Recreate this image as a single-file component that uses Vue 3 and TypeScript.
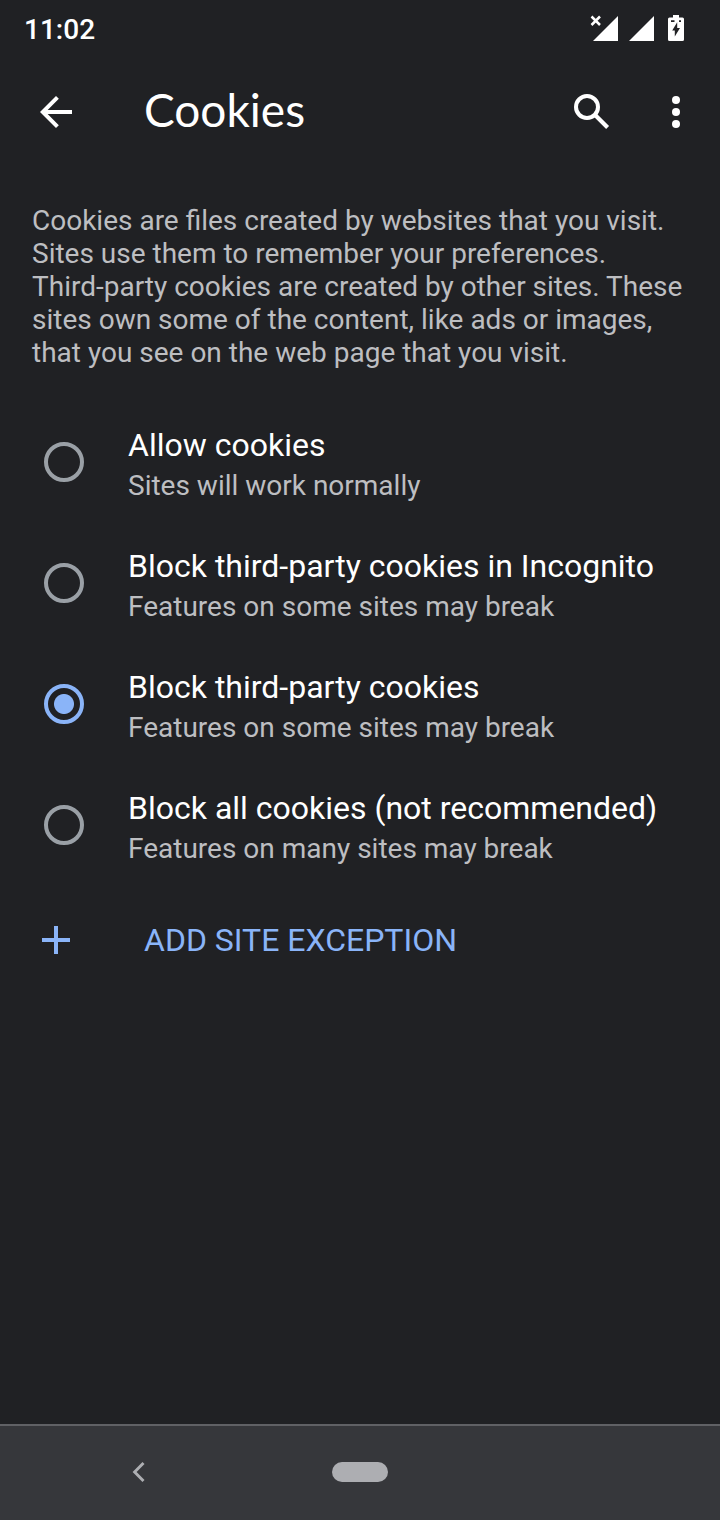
<script setup lang="ts">
import { ref } from 'vue'

interface CookieOption {
  id: string
  title: string
  detail: string
}

const options: CookieOption[] = [
  { id: 'allow', title: 'Allow cookies', detail: 'Sites will work normally' },
  { id: 'incognito', title: 'Block third-party cookies in Incognito', detail: 'Features on some sites may break' },
  { id: 'third-party', title: 'Block third-party cookies', detail: 'Features on some sites may break' },
  { id: 'all', title: 'Block all cookies (not recommended)', detail: 'Features on many sites may break' },
]

const selected = ref('third-party')
</script>

<template>
  <div class="screen">
    <div class="status">
      <span class="clock">11:02</span>
      <div class="indicators">
        <svg class="signal-off" width="28" height="28" viewBox="0 0 28 28" aria-hidden="true">
          <path d="M28 2V27H3Z" fill="#fff" />
          <path d="M1.500 2.500L10 11M10 2.500L1.500 11" stroke="#fff" stroke-width="2.500" />
        </svg>
        <svg class="signal" width="26" height="28" viewBox="0 0 26 28" aria-hidden="true">
          <path d="M26 2V27H1Z" fill="#fff" />
        </svg>
        <svg width="16" height="28" viewBox="0 0 16 28" aria-hidden="true">
          <path d="M5 1H11V3.500H14.500Q16 3.500 16 5V25.500Q16 27 14.500 27H1.500Q0 27 0 25.500V5Q0 3.500 1.500 3.500H5Z" fill="#fff" />
          <path d="M3 6.200H6.500V8H3ZM11 6.200H13V8H11ZM9.200 8.200V14H12L6.800 22.500V16.500H4.200Z" fill="#202124" />
        </svg>
      </div>
    </div>

    <header class="toolbar">
      <button class="icon-button" type="button" aria-label="Back">
        <svg width="48" height="48" viewBox="0 0 24 24" aria-hidden="true">
          <path d="M20 11H7.830l5.590-5.590L12 4l-8 8 8 8 1.410-1.410L7.830 13H20v-2z" fill="#fff" />
        </svg>
      </button>
      <h1>Cookies</h1>
      <button class="icon-button search" type="button" aria-label="Search">
        <svg width="48" height="48" viewBox="0 0 24 24" aria-hidden="true">
          <circle cx="9.500" cy="9.500" r="5.500" fill="none" stroke="#fff" stroke-width="2" />
          <path d="M13.300 13.300L19.800 19.800" stroke="#fff" stroke-width="2.100" />
        </svg>
      </button>
      <button class="icon-button" type="button" aria-label="More options">
        <svg width="48" height="48" viewBox="0 0 24 24" aria-hidden="true">
          <g fill="#fff">
            <circle cx="12" cy="6" r="2" />
            <circle cx="12" cy="12" r="2" />
            <circle cx="12" cy="18" r="2" />
          </g>
        </svg>
      </button>
    </header>

    <main>
      <p class="intro">
        Cookies are files created by websites that you visit. Sites use them to remember your preferences.
        Third-&#8288;party cookies are created by other sites. These sites own some of the content, like ads
        or images, that you see on the web page that you visit.
      </p>

      <div role="radiogroup" aria-label="Cookies">
        <label v-for="option in options" :key="option.id" class="option" :for="option.id">
          <input :id="option.id" v-model="selected" type="radio" name="cookies" :value="option.id" />
          <span class="text">
            <span class="title">{{ option.title }}</span>
            <span class="detail">{{ option.detail }}</span>
          </span>
        </label>
      </div>

      <button class="add" type="button">
        <svg width="48" height="48" viewBox="0 0 24 24" aria-hidden="true">
          <path d="M19 13h-6v6h-2v-6H5v-2h6V5h2v6h6v2z" fill="#8ab4f8" />
        </svg>
        <span>ADD SITE EXCEPTION</span>
      </button>
    </main>

    <nav class="navbar" aria-label="System navigation">
      <button class="nav-back" type="button" aria-label="System back">
        <svg width="16" height="24" viewBox="0 0 16 24" aria-hidden="true">
          <path d="M12.500 2.900L3.600 12L12.500 21.100" fill="none" stroke="#adaeb2" stroke-width="2.900" />
        </svg>
      </button>
      <button class="home" type="button" aria-label="Home"></button>
      <span></span>
    </nav>
  </div>
</template>

<style>
body {
  margin: 0;
  background: #202124;
}
</style>

<style scoped>
.screen {
  display: flex;
  flex-direction: column;
  min-height: 100vh;
  background: #202124;
  color: #fff;
  font-family: Roboto, "Liberation Sans", sans-serif;
}

button {
  padding: 0;
  border: 0;
  background: none;
  color: inherit;
  font: inherit;
  cursor: pointer;
}

svg {
  display: block;
}

.status {
  display: flex;
  align-items: center;
  justify-content: space-between;
  height: 56px;
  padding: 0 36px 0 24px;
}

.clock {
  padding-top: 4px;
  font-size: 28px;
  font-weight: 500;
  line-height: 32px;
}

.indicators {
  display: flex;
}

.signal-off {
  margin-right: 10px;
}

.signal {
  margin-right: 14px;
}

.toolbar {
  display: flex;
  align-items: center;
  height: 112px;
  padding: 0 20px 0 32px;
}

h1 {
  flex: 1;
  margin: 0 0 0 64px;
  padding-bottom: 4px;
  font-family: Lato, "Open Sans", sans-serif;
  font-size: 46px;
  font-weight: 400;
  line-height: 56px;
}

.search {
  margin-right: 36px;
}

.intro {
  margin: 0;
  padding: 36px 32px 33px;
  color: #bdbec1;
  font-size: 28px;
  line-height: 33px;
}

.option {
  display: flex;
  align-items: flex-start;
  padding: 24px 32px 21px 44px;
  cursor: pointer;
}

input {
  appearance: none;
  flex: none;
  width: 40px;
  height: 40px;
  margin: 16px 44px 0 0;
  border: 4px solid #9aa0a6;
  border-radius: 50%;
}

input:checked {
  border-color: #8ab4f8;
  background: radial-gradient(circle, #8ab4f8 0 9.5px, transparent 10.5px);
}

.text {
  display: flex;
  flex-direction: column;
  gap: 5px;
}

.title {
  font-size: 32px;
  line-height: 38px;
}

.detail {
  color: #bdbec1;
  font-size: 28px;
  line-height: 33px;
}

.add {
  display: flex;
  align-items: center;
  gap: 64px;
  width: 100%;
  height: 108px;
  padding: 0 32px;
  color: #8ab4f8;
  font-size: 32px;
  line-height: 38px;
}

.navbar {
  display: grid;
  grid-template-columns: 1fr auto 1fr;
  align-items: center;
  height: 92px;
  margin-top: auto;
  padding-bottom: 2px;
  border-top: 2px solid #606165;
  background: #36373b;
}

.nav-back {
  justify-self: end;
  margin-right: 185px;
}

.home {
  width: 56px;
  height: 20px;
  border-radius: 10px;
  background: #adaeb2;
}
</style>
